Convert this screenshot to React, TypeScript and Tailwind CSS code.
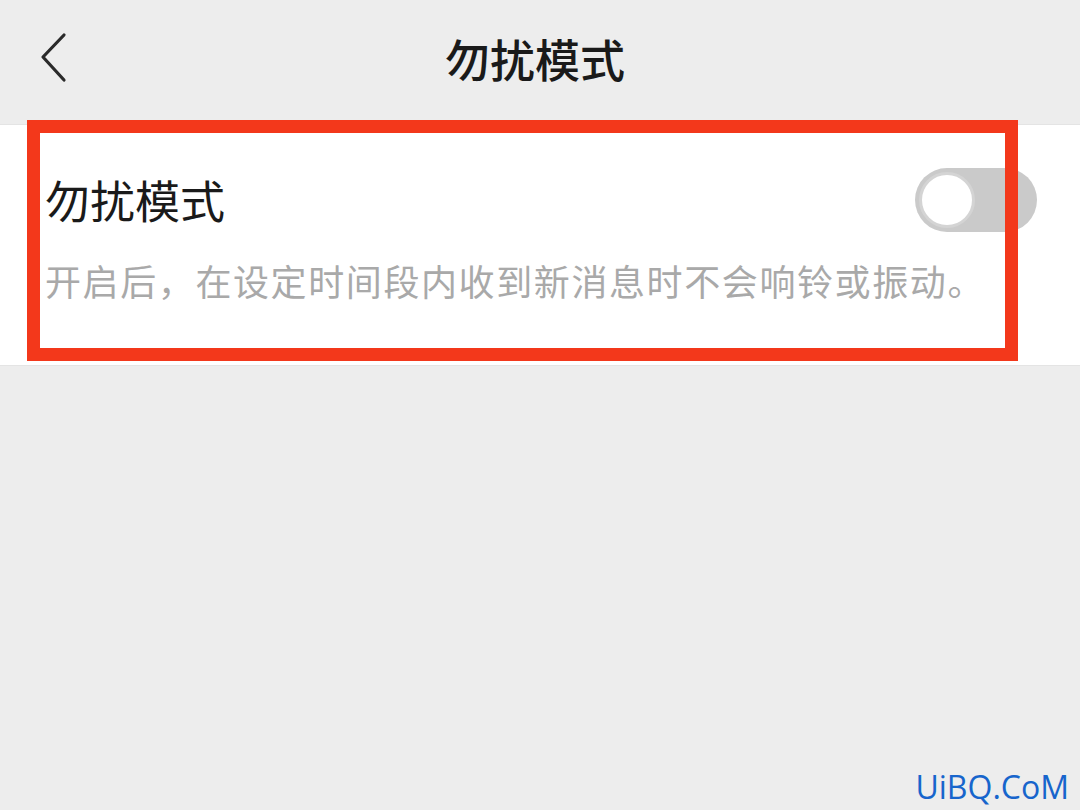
import React from "react";

export default function App() {
  return (
    <div
      className="relative w-[1080px] h-[810px] overflow-hidden bg-[#ededed]"
      style={{ fontFamily: '"Noto Sans CJK SC", "Noto Sans", sans-serif' }}
    >
      {/* Header */}
      <div className="relative flex h-[124px] items-center justify-center pb-[6px] pr-[10px]">
        <svg
          className="absolute left-[36px] top-[30px]"
          width="36"
          height="56"
          viewBox="0 0 36 56"
        >
          <path
            d="M28 5 L7 27 L28 50"
            fill="none"
            stroke="#2a2a2a"
            strokeWidth="3.2"
            strokeLinecap="round"
            strokeLinejoin="round"
          />
        </svg>
        <div className="text-[45px] leading-[56px] font-medium text-[#1a1a1a]">
          勿扰模式
        </div>
      </div>

      {/* Card */}
      <div className="bg-white border-y border-[#e4e4e4] pt-[43px] pb-[62px] pl-[45px] pr-[43px]">
        <div className="flex h-[64px] items-center justify-between">
          <div className="text-[45px] leading-[56px] text-[#1a1a1a]">勿扰模式</div>
          <div className="flex h-[64px] w-[122px] items-center rounded-full bg-[#cacaca] pl-[4px]">
            <div className="h-[56px] w-[56px] rounded-full bg-white border-[3px] border-[#d4d4d4]" />
          </div>
        </div>
        <div className="mt-[26px] text-[36px] leading-[45px] tracking-[1.6px] text-[#a9a9a9] whitespace-nowrap">
          开启后，在设定时间段内收到新消息时不会响铃或振动。
        </div>
      </div>

      {/* Red annotation box */}
      <div className="absolute left-[27px] top-[120px] h-[241px] w-[991px] border-[13px] border-[#f3381b]" />

      {/* Watermark */}
      <div
        className="absolute right-[11px] bottom-[5px] text-[32px] leading-[36px] text-[#1765cc]"
        style={{ fontFamily: '"Open Sans", "DejaVu Sans", sans-serif' }}
      >
        UiBQ.CoM
      </div>
    </div>
  );
}
